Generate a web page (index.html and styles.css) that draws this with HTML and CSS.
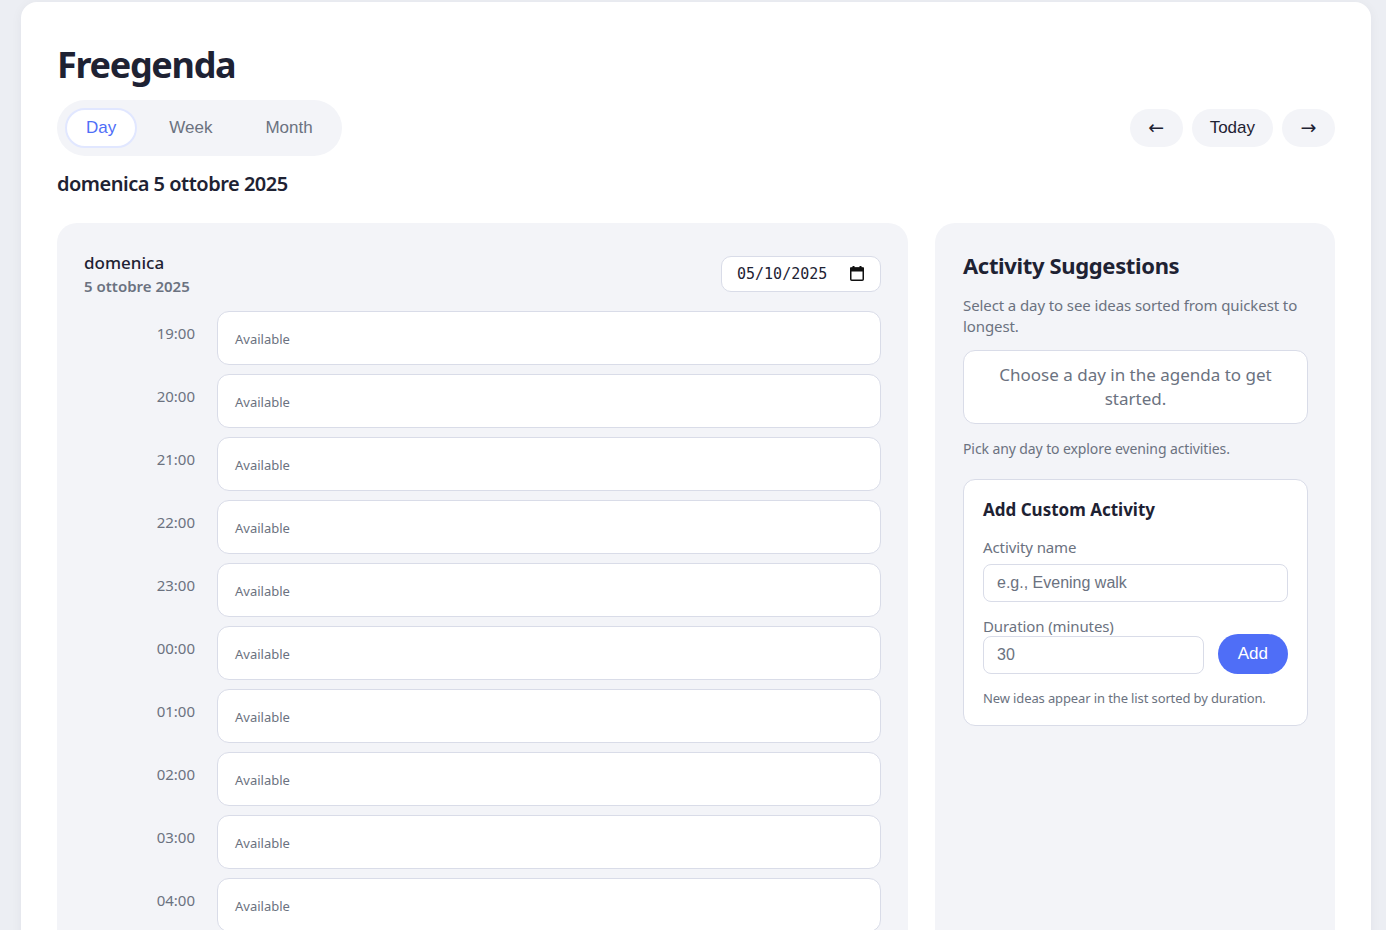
FILE: index.html
```html
<!DOCTYPE html>
<html lang="it">
<head>
<meta charset="utf-8">
<title>Freegenda</title>
<link rel="stylesheet" href="styles.css">
</head>
<body>
<div class="app">
  <h1 class="title">Freegenda</h1>
  <div class="toolbar">
    <div class="tabs">
      <button class="tab active">Day</button>
      <button class="tab">Week</button>
      <button class="tab">Month</button>
    </div>
    <div class="nav">
      <button class="nav-btn arrow">&larr;</button>
      <button class="nav-btn">Today</button>
      <button class="nav-btn arrow">&rarr;</button>
    </div>
  </div>
  <h2 class="current-date">domenica 5 ottobre 2025</h2>

  <div class="layout">
    <section class="day-panel">
      <div class="day-head">
        <div class="day-names">
          <div class="day-name">domenica</div>
          <div class="day-sub">5 ottobre 2025</div>
        </div>
        <div class="date-input">
          <span class="date-value">05/10/2025</span>
          <svg class="cal-icon" width="14" height="15" viewBox="0 0 14 15">
            <rect x="0.75" y="2" width="12.5" height="12.25" rx="1" fill="none" stroke="#111" stroke-width="1.5"/>
            <rect x="0" y="1.5" width="14" height="4" fill="#111"/>
            <rect x="2.5" y="0" width="2" height="3" fill="#111"/>
            <rect x="9.5" y="0" width="2" height="3" fill="#111"/>
          </svg>
        </div>
      </div>
      <div class="slots">
        <div class="slot-row"><div class="time">19:00</div><div class="slot">Available</div></div>
        <div class="slot-row"><div class="time">20:00</div><div class="slot">Available</div></div>
        <div class="slot-row"><div class="time">21:00</div><div class="slot">Available</div></div>
        <div class="slot-row"><div class="time">22:00</div><div class="slot">Available</div></div>
        <div class="slot-row"><div class="time">23:00</div><div class="slot">Available</div></div>
        <div class="slot-row"><div class="time">00:00</div><div class="slot">Available</div></div>
        <div class="slot-row"><div class="time">01:00</div><div class="slot">Available</div></div>
        <div class="slot-row"><div class="time">02:00</div><div class="slot">Available</div></div>
        <div class="slot-row"><div class="time">03:00</div><div class="slot">Available</div></div>
        <div class="slot-row"><div class="time">04:00</div><div class="slot">Available</div></div>
        <div class="slot-row"><div class="time">05:00</div><div class="slot">Available</div></div>
        <div class="slot-row"><div class="time">06:00</div><div class="slot">Available</div></div>
      </div>
    </section>

    <aside class="side-panel">
      <h3 class="side-title">Activity Suggestions</h3>
      <p class="side-sub">Select a day to see ideas sorted from quickest to longest.</p>
      <div class="empty-box">Choose a day in the agenda to get started.</div>
      <p class="hint">Pick any day to explore evening activities.</p>

      <div class="custom-card">
        <h4 class="custom-title">Add Custom Activity</h4>
        <label class="field-label">Activity name</label>
        <input class="field-input" type="text" placeholder="e.g., Evening walk">
        <div class="duration-row">
          <div class="duration-field">
            <label class="field-label tight">Duration (minutes)</label>
            <input class="field-input" type="text" value="30">
          </div>
          <button class="add-btn">Add</button>
        </div>
        <p class="note">New ideas appear in the list sorted by duration.</p>
      </div>
    </aside>
  </div>
</div>
</body>
</html>
```

FILE: styles.css
```css
* { box-sizing: border-box; }

html, body { height: 100%; }

body {
  margin: 0;
  background: #eceef3;
  font-family: "Noto Sans", "Open Sans", sans-serif;
  color: #1e2233;
  overflow: hidden;
}

.app {
  margin: 2px 15px 0 21px;
  background: #ffffff;
  border-radius: 16px 16px 0 0;
  padding: 38px 36px 0 36px;
  min-height: 1000px;
  box-shadow: 0 2px 12px rgba(30, 34, 60, 0.05);
}

.title {
  margin: 0;
  font-size: 36px;
  line-height: 50px;
  font-weight: 700;
  color: #1e2233;
  letter-spacing: -1.3px;
}

.toolbar {
  display: flex;
  justify-content: space-between;
  align-items: center;
  margin-top: 10px;
}

.tabs {
  display: flex;
  gap: 11px;
  padding: 8px 8px;
  background: #f3f4f8;
  border-radius: 28px;
}

.tab {
  height: 40px;
  padding: 0 19px;
  border: 2px solid transparent;
  border-radius: 20px;
  background: transparent;
  font-family: "Liberation Sans", Arial, sans-serif;
  font-size: 17px;
  color: #6b7280;
  cursor: pointer;
}

.tab.active {
  background: #ffffff;
  border-color: #e1e7ff;
  color: #4f6ef7;
}

.nav {
  display: flex;
  gap: 9px;
}

.nav-btn {
  height: 38px;
  padding: 0 18px;
  border: none;
  border-radius: 19px;
  background: #f3f4f8;
  font-family: "Liberation Sans", Arial, sans-serif;
  font-size: 17px;
  color: #1e2233;
}

.nav-btn.arrow {
  width: 53px;
  padding: 0 0 2px 0;
  font-family: "DejaVu Sans", sans-serif;
  font-size: 19px;
  line-height: 1;
}

.current-date {
  margin: 13px 0 0 0;
  font-size: 20px;
  line-height: 30px;
  font-weight: 600;
  color: #1e2233;
  letter-spacing: -0.5px;
}

.layout {
  display: grid;
  grid-template-columns: 1fr 400px;
  gap: 27px;
  margin-top: 24px;
  align-items: stretch;
}

.day-panel {
  background: #f3f4f8;
  border-radius: 20px;
  padding: 27px 27px 27px 27px;
}

.day-head {
  display: flex;
  justify-content: space-between;
  align-items: center;
  margin-bottom: 14px;
}

.day-name {
  font-size: 17px;
  line-height: 25px;
  font-weight: 500;
  color: #1e2233;
}

.day-sub {
  font-size: 15px;
  line-height: 22px;
  font-weight: 600;
  color: #6b7280;
}

.date-input {
  display: flex;
  align-items: center;
  justify-content: space-between;
  width: 160px;
  height: 36px;
  padding: 0 16px 0 15px;
  background: #ffffff;
  border: 1px solid #d9dce8;
  border-radius: 10px;
}

.date-value {
  font-family: "DejaVu Sans Mono", monospace;
  font-size: 15px;
  color: #1e2233;
}

.cal-icon { display: block; }

.slots {
  display: flex;
  flex-direction: column;
  gap: 9px;
}

.slot-row {
  display: grid;
  grid-template-columns: 111px 1fr;
  gap: 22px;
}

.time {
  text-align: right;
  font-size: 15px;
  line-height: 20px;
  padding-top: 12px;
  color: #6b7280;
}

.slot {
  height: 54px;
  background: #ffffff;
  border: 1px solid #d9dce8;
  border-radius: 12px;
  padding: 18px 17px 0 17px;
  font-size: 13px;
  line-height: 18px;
  color: #6b7280;
}

.side-panel {
  background: #f3f4f8;
  border-radius: 20px;
  padding: 27px 27px 27px 28px;
}

.side-title {
  margin: 0;
  font-size: 22px;
  line-height: 30px;
  font-weight: 700;
  color: #1e2233;
  letter-spacing: -0.35px;
}

.side-sub {
  margin: 15px 0 0 0;
  font-size: 15px;
  line-height: 21px;
  color: #6b7280;
  letter-spacing: -0.1px;
}

.empty-box {
  margin-top: 13px;
  background: #ffffff;
  border: 1px solid #d9dce8;
  border-radius: 12px;
  padding: 12px 20px;
  text-align: center;
  font-size: 17px;
  line-height: 24px;
  color: #6b7280;
}

.hint {
  margin: 15px 0 0 0;
  font-size: 14px;
  line-height: 20px;
  color: #6b7280;
  letter-spacing: -0.1px;
}

.custom-card {
  margin-top: 20px;
  background: #ffffff;
  border: 1px solid #d9dce8;
  border-radius: 12px;
  padding: 18px 19px 18px 19px;
}

.custom-title {
  margin: 0;
  font-size: 17px;
  line-height: 24px;
  font-weight: 700;
  color: #1e2233;
}

.field-label {
  display: block;
  margin: 15px 0 7px 0;
  font-size: 15px;
  line-height: 20px;
  color: #6b7280;
  letter-spacing: -0.1px;
}

.field-label.tight {
  margin: 14px 0 0 0;
}

.field-input {
  display: block;
  width: 100%;
  height: 38px;
  padding: 0 13px;
  border: 1px solid #d9dce8;
  border-radius: 8px;
  background: #ffffff;
  font-family: "Liberation Sans", Arial, sans-serif;
  font-size: 16px;
  color: #6b7280;
  outline: none;
}

.field-input::placeholder { color: #6b7280; }

.duration-row {
  display: flex;
  align-items: flex-end;
  gap: 14px;
}

.duration-field { flex: 1; }

.add-btn {
  height: 40px;
  padding: 0 20px;
  border: none;
  border-radius: 20px;
  background: #4f6ef7;
  color: #ffffff;
  font-family: "Liberation Sans", Arial, sans-serif;
  font-size: 17px;
}

.note {
  margin: 15px 0 0 0;
  font-size: 13px;
  line-height: 18px;
  color: #6b7280;
  letter-spacing: -0.12px;
}
```
